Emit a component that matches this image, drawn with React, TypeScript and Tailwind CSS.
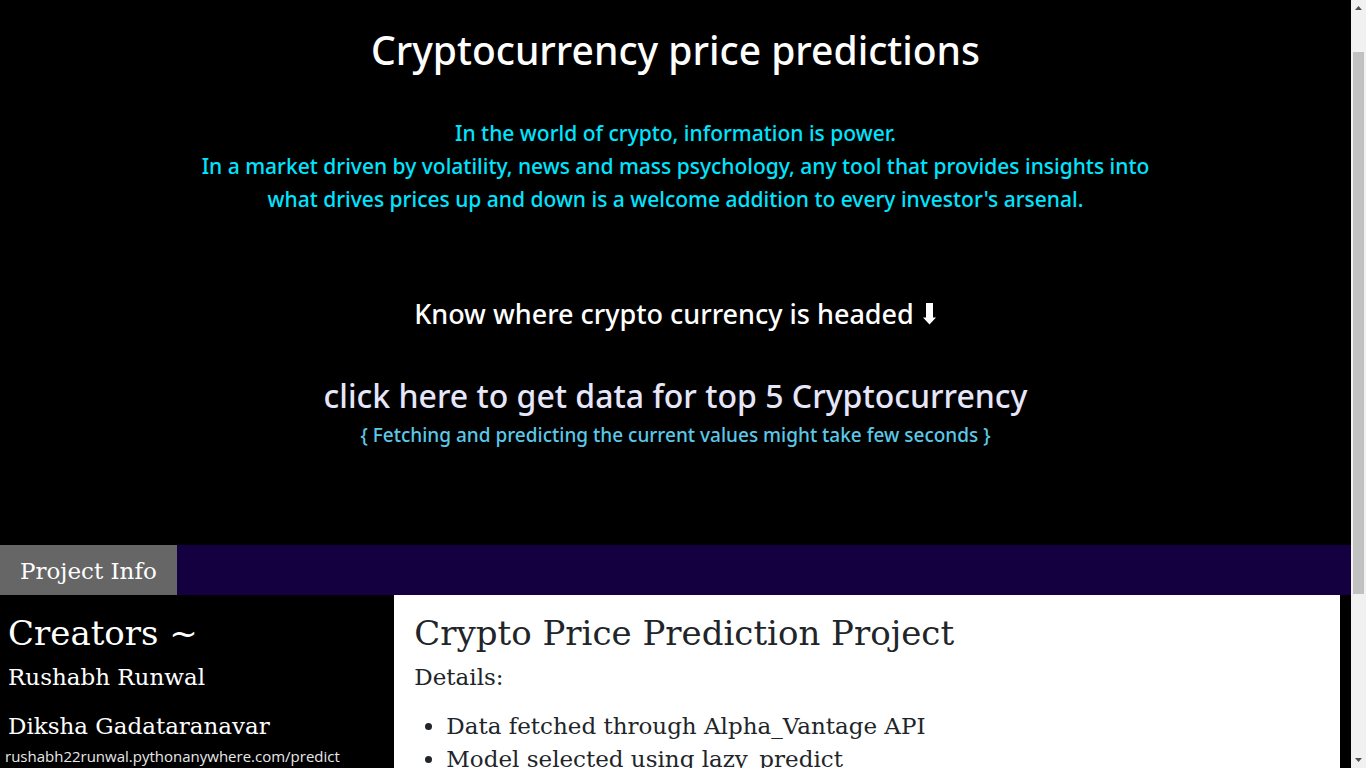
const creators = ['Rushabh Runwal', 'Diksha Gadataranavar'];
const details = ['Data fetched through Alpha_Vantage API', 'Model selected using lazy_predict'];

function Hero() {
  return (
    <header className="bg-black px-6 pt-[26px] pb-[98px] text-center font-['Noto_Sans',sans-serif] font-medium text-white">
      <h1 className="text-[39px] leading-[48px]">Cryptocurrency price predictions</h1>
      <p className="mx-auto mt-[43px] max-w-[1000px] text-[21px] leading-[33px] text-[#00e5ff]">
        In the world of crypto, information is power.
        <br />
        In a market driven by volatility, news and mass psychology, any tool that provides insights into
        <br />
        what drives prices up and down is a welcome addition to every investor's arsenal.
      </p>
      <h2 className="mt-[81px] flex items-center justify-center gap-2 text-[27px] leading-[34px]">
        Know where crypto currency is headed
        <svg className="h-[22px] w-[15px]" viewBox="0 0 15 22" fill="currentColor" aria-hidden="true">
          <path d="M4 0h7v14.5h3L7.5 21.5 1 14.5h3z" />
        </svg>
      </h2>
      <a href="/predict" className="mt-[46px] block text-[32px] leading-[38px] text-[#e6e6fa]">
        click here to get data for top 5 Cryptocurrency
      </a>
      <p className="mt-2 text-[19px] leading-6 text-[#5bc8e8]">
        {'{ Fetching and predicting the current values might take few seconds }'}
      </p>
    </header>
  );
}

function Scrollbar() {
  return (
    <div className="flex w-[15px] shrink-0 flex-col items-center bg-[#f1f1f1]" aria-hidden="true">
      <svg className="h-[52px] w-[15px] shrink-0" viewBox="0 0 15 52" fill="#505050">
        <path d="M4 10h7L7.5 6z" />
      </svg>
      <div className="w-[11px] grow-[542] basis-0 bg-[#c1c1c1]" />
      <div className="flex grow-[174] basis-0 items-end">
        <svg className="h-[15px] w-[15px]" viewBox="0 0 15 15" fill="#505050">
          <path d="M4 5h7L7.5 9z" />
        </svg>
      </div>
    </div>
  );
}

export default function App() {
  return (
    <div className="relative flex h-screen overflow-hidden bg-black font-['Open_Sans','Noto_Sans',sans-serif]">
      <div className="min-w-0 flex-1 overflow-hidden">
        <Hero />
        <div className="font-['DejaVu_Serif',serif] text-[23px] leading-[33px]">
          <nav className="flex bg-[#140040]">
            <a href="#project" className="bg-[#666666] px-5 pt-[10px] pb-[7px] text-white">
              Project Info
            </a>
          </nav>
          <div className="flex">
            <aside className="flex-1 px-2 pt-[18px] text-white">
              <h2 className="mb-2 text-[34px] leading-10">Creators ~</h2>
              {creators.map((name) => (
                <p key={name} className="mb-4">{name}</p>
              ))}
            </aside>
            <main id="project" className="mr-[11px] w-[70%] bg-white px-5 pt-[18px] pb-10 text-[#212529]">
              <h2 className="mb-2 text-[34px] leading-10">Crypto Price Prediction Project</h2>
              <p className="mb-4">Details:</p>
              <ul className="list-disc pl-8">
                {details.map((item) => (
                  <li key={item}>{item}</li>
                ))}
              </ul>
            </main>
          </div>
        </div>
      </div>
      <Scrollbar />
      <div className="absolute bottom-0 left-0 bg-black px-[5px] text-[15px] leading-6 text-[#e8e8e8]">
        rushabh22runwal.pythonanywhere.com/predict
      </div>
    </div>
  );
}
